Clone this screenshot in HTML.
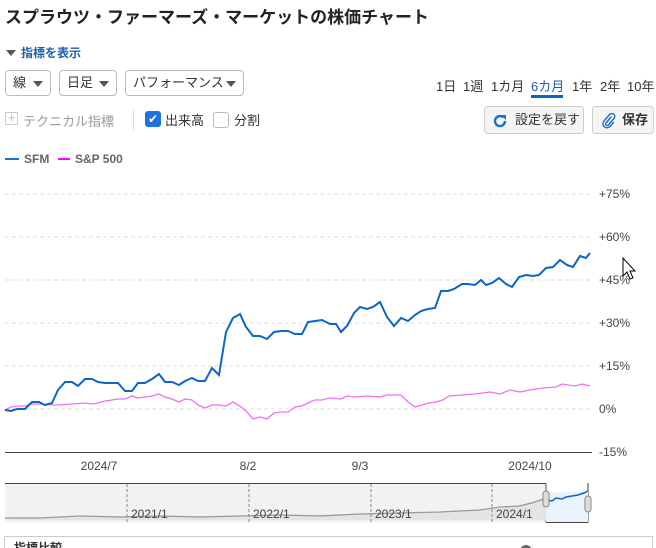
<!DOCTYPE html>
<html><head><meta charset="utf-8"><style>
body{margin:0;width:656px;height:548px;overflow:hidden;background:#fff;font-family:"Liberation Sans","Noto Sans CJK JP",sans-serif;color:#333;position:relative}
.a{position:absolute;white-space:nowrap}
.sel{position:absolute;top:70px;height:26px;border:1px solid #bbb;border-radius:4px;box-sizing:border-box;font-size:13px;line-height:24px;padding-left:7px;color:#333}
.sel i{position:absolute;right:7px;top:10px;border-left:5px solid transparent;border-right:5px solid transparent;border-top:6px solid #555}
.btn{position:absolute;top:106px;height:28px;border:1px solid #ccc;border-radius:4px;background:#f5f5f5;box-sizing:border-box;font-size:13px;line-height:26px}
</style></head><body>
<div class="a" style="left:5px;top:3px;font-size:17px;font-weight:bold;color:#222">スプラウツ・ファーマーズ・マーケットの株価チャート</div>
<div class="a" style="left:6px;top:44px;font-size:12px;font-weight:bold;color:#1a5fa8"><span style="display:inline-block;border-left:5px solid transparent;border-right:5px solid transparent;border-top:6px solid #555;margin-right:5px;vertical-align:1px"></span>指標を表示</div>
<div class="sel" style="left:5px;width:46px">線<i></i></div>
<div class="sel" style="left:59px;width:58px">日足<i></i></div>
<div class="sel" style="left:125px;width:119px">パフォーマンス<i></i></div>
<div class="a" style="left:436px;top:76px;font-size:13px">1日</div>
<div class="a" style="left:463px;top:76px;font-size:13px">1週</div>
<div class="a" style="left:491px;top:76px;font-size:13px">1カ月</div>
<div class="a" style="left:531px;top:76px;font-size:13px;color:#1a5fa8">6カ月</div>
<div class="a" style="left:531px;top:95px;width:32px;height:3px;background:#0a63c9"></div>
<div class="a" style="left:572px;top:76px;font-size:13px">1年</div>
<div class="a" style="left:600px;top:76px;font-size:13px">2年</div>
<div class="a" style="left:627px;top:76px;font-size:13px">10年</div>
<div class="a" style="left:5px;top:112px;width:13px;height:13px;border:1px solid #ccc;box-sizing:border-box;color:#bbb;font-size:13px;line-height:10px;text-align:center">+</div>
<div class="a" style="left:23px;top:111px;font-size:13px;color:#999">テクニカル指標</div>
<div class="a" style="left:133px;top:110px;width:1px;height:20px;background:#ddd"></div>
<div class="a" style="left:145px;top:111px;width:16px;height:16px;background:#1f73e0;border-radius:3px;color:#fff;font-size:12px;line-height:16px;text-align:center">✔</div>
<div class="a" style="left:165px;top:110px;font-size:13px">出来高</div>
<div class="a" style="left:213px;top:112px;width:16px;height:16px;border:1px solid #bbb;border-radius:3px;box-sizing:border-box"></div>
<div class="a" style="left:234px;top:110px;font-size:13px">分割</div>
<div class="btn" style="left:484px;width:100px"><svg style="position:absolute;left:7px;top:6px" width="16" height="16" viewBox="0 0 16 16"><path d="M13,8 A5,5 0 1 1 11.5,4.5" fill="none" stroke="#1a6fd0" stroke-width="2.4"/><path d="M9,2 L14,2 L14,7 Z" fill="#1a6fd0"/></svg><span style="position:absolute;left:30px">設定を戻す</span></div>
<div class="btn" style="left:592px;width:62px"><svg style="position:absolute;left:8px;top:6px" width="16" height="16" viewBox="0 0 16 16"><path d="M10,4 L5,10 A1.6,1.6 0 0 0 7.5,12 L13,5.5 A3,3 0 0 0 8.5,1.5 L3,8 A4,4 0 0 0 9,13.5 L12.5,9.5" fill="none" stroke="#1a6fd0" stroke-width="1.4" stroke-linecap="round"/></svg><span style="position:absolute;left:29px;font-weight:bold">保存</span></div>
<div class="a" style="left:5px;top:158px;width:14px;height:2px;background:#1a6fd0"></div>
<div class="a" style="left:24px;top:152px;font-size:12px;font-weight:bold;color:#666">SFM</div>
<div class="a" style="left:58px;top:158px;width:12px;height:2px;background:#f0f"></div>
<div class="a" style="left:75px;top:152px;font-size:12px;font-weight:bold;color:#666">S&amp;P 500</div>
<svg class="a" style="left:0;top:0" width="656" height="548" font-family="Liberation Sans,sans-serif" font-size="12" fill="#444">
<g stroke="#ddd" stroke-dasharray="4,3">
<line x1="5" x2="592" y1="194" y2="194"/><line x1="5" x2="592" y1="237" y2="237"/><line x1="5" x2="592" y1="280" y2="280"/><line x1="5" x2="592" y1="323" y2="323"/><line x1="5" x2="592" y1="366" y2="366"/><line x1="5" x2="592" y1="409" y2="409"/></g>
<line x1="5" x2="592" y1="452.5" y2="452.5" stroke="#444"/>
<text x="599" y="198">+75%</text><text x="599" y="241">+60%</text><text x="599" y="284">+45%</text><text x="599" y="327">+30%</text><text x="599" y="370">+15%</text><text x="599" y="413">0%</text><text x="599" y="456">-15%</text>
<text x="99" y="470" text-anchor="middle">2024/7</text><text x="248" y="470" text-anchor="middle">8/2</text><text x="360" y="470" text-anchor="middle">9/3</text><text x="530" y="470" text-anchor="middle">2024/10</text>
<polyline fill="none" stroke="#f070f0" stroke-width="1.3" points="5,410 11,407 20,406 25,406 32,404 40,404 52,405 58,405 72,404 85,403 92,404 98,403 105,401 112,400 118,399 125,399 132,396 138,398 145,397 152,396 159,394 165,397 172,399 179,402 185,399 192,400 198,405 205,408 212,405 219,405 226,406 233,402 240,406 246,411 253,419 260,417 267,419 274,413 281,412 288,412 295,407 302,406 308,403 315,400 322,400 329,398 341,399 347,396 354,397 367,396 380,397 387,395 401,395 408,402 415,407 422,405 429,403 436,402 443,400 449,396 462,395 475,394 490,392 500,394 510,390 520,392 530,390 543,388 556,387 562,384 575,386 582,384 590,386"/>
<polyline fill="none" stroke="#0a66c8" stroke-width="2" points="5,410 11,411 17,409 25,409 32,402 39,402 45,405 52,403 58,390 65,382 72,382 78,386 85,379 92,379 98,382 105,383 118,383 125,391 132,391 138,383 145,383 152,379 159,374 165,382 172,382 179,385 185,381 192,378 198,381 205,381 212,368 219,375 226,332 233,318 240,314 246,327 253,336 260,336 267,339 274,332 281,331 288,331 295,334 302,334 308,322 315,321 322,320 330,324 336,324 341,332 347,326 354,313 360,307 367,309 373,307 380,302 387,317 394,326 401,318 408,321 415,315 421,311 428,309 435,308 441,291 448,291 454,289 462,284 468,284 475,285 481,280 486,285 492,283 499,278 506,284 512,287 519,277 526,275 533,276 539,275 546,268 553,267 560,260 567,265 573,267 580,256 586,258 590,253"/>
<path d="M623,258 v18 l4,-4 l3,7 l3,-1 l-3,-7 h5 z" fill="#fff" stroke="#000" stroke-width="1"/>
<rect x="5" y="483.5" width="540" height="39" fill="#f2f2f2" stroke="none"/>
<path d="M5,483.5 H546 M546,483.5 V522.5 M588,483 V522.5 M546,522.5 H588" stroke="#444" fill="none"/>
<rect x="546" y="492" width="42" height="30" fill="#eaf2fb"/>
<path d="M5,520 L546,520 L546,498 L520,505 L495,509 L400,513 L300,515 L200,516 L100,517 L50,518 L5,519 Z" fill="#e4e4e4"/>
<polyline fill="none" stroke="#999" stroke-width="1.3" points="5,518 40,518 80,516 120,517 160,516 200,517 240,516 280,515 320,516 360,514 400,513 440,512 480,510 500,507 520,506 535,502 546,498"/>
<polyline fill="none" stroke="#0a66c8" stroke-width="1.5" points="546,500 552,501 556,498 562,499 566,497 572,496 578,495 584,493 588,491"/>
<g stroke="#888" stroke-dasharray="3,2"><line x1="127" x2="127" y1="484" y2="522"/><line x1="249" x2="249" y1="484" y2="522"/><line x1="371" x2="371" y1="484" y2="522"/><line x1="492" x2="492" y1="484" y2="522"/></g>
<text x="131" y="518">2021/1</text><text x="253" y="518">2022/1</text><text x="375" y="518">2023/1</text><text x="496" y="518">2024/1</text>
<rect x="543" y="491" width="6" height="16" rx="3" fill="#ddd" stroke="#888"/><rect x="585" y="496" width="6" height="16" rx="3" fill="#ddd" stroke="#888"/>
<rect x="4.5" y="536.5" width="648" height="20" fill="#fff" stroke="#ccc"/>
<text x="14" y="552" font-size="12" font-weight="bold" fill="#333" font-family="Liberation Sans,Noto Sans CJK JP,sans-serif">指標比較</text>
<circle cx="526" cy="551" r="6" fill="#666"/>
</svg>
</body></html>
